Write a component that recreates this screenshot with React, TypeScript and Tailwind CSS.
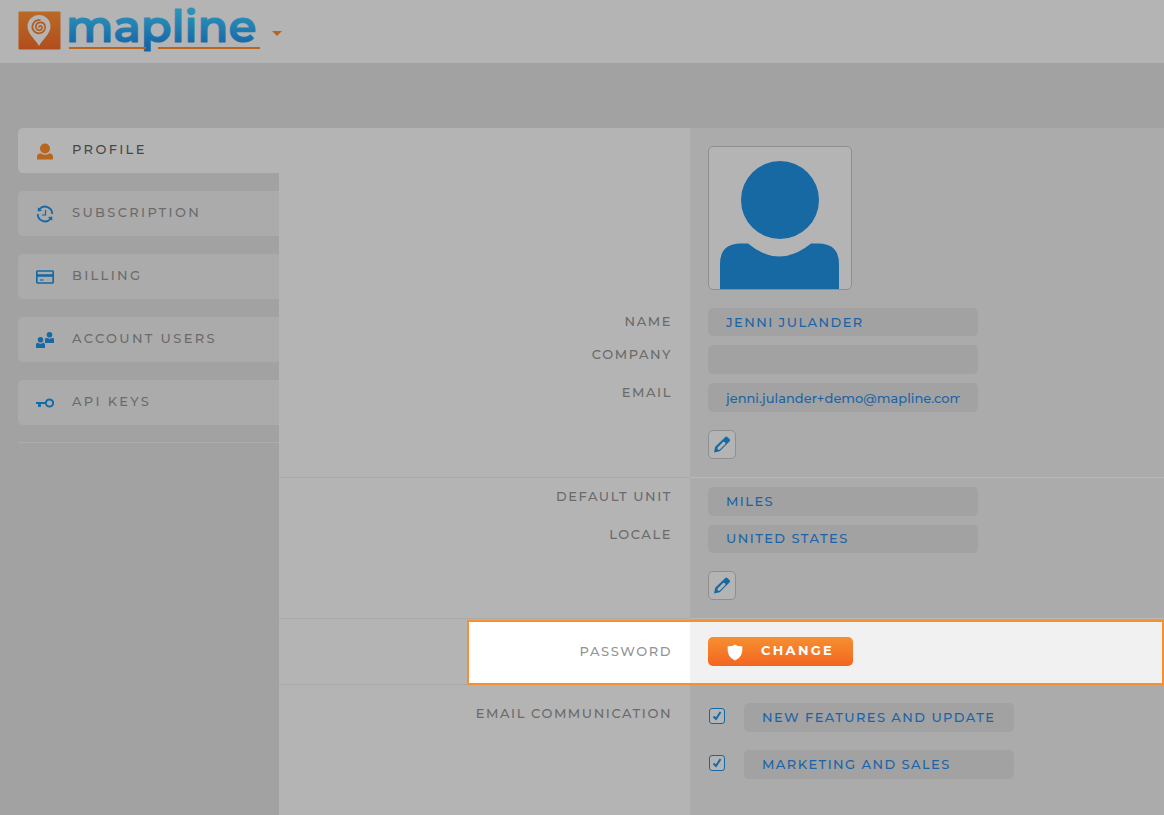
import type { ReactNode } from "react";

const labelClass = "pr-[18px] text-right text-[13px] leading-[18px] font-medium tracking-[0.12em] text-[#6b6b6b]";
const fieldClass =
    "block w-[270px] appearance-none rounded-[5px] bg-[#a2a2a2] px-[18px] text-[13px] font-medium text-[#1c64a6] outline-none";

function UserIcon() {
    return (
        <svg viewBox="0 0 18 18" className="h-[18px] w-[18px]" fill="#b8651f">
            <circle cx="9" cy="6.500" r="5" />
            <path d="M1 17.500v-2.500q0-3.300 3.400-3.700 4.600 3 9.200 0 3.400.4 3.400 3.700v2.500z" />
        </svg>
    );
}

function HistoryIcon() {
    return (
        <svg viewBox="0 0 18 18" className="h-[18px] w-[18px]" fill="none" stroke="#1769a4">
            <path d="M3.400 4.300a7.200 7.200 0 0 1 12.800 4.700" strokeWidth="1.800" />
            <path d="M14.600 13.700A7.200 7.200 0 0 1 1.800 9" strokeWidth="1.800" />
            <path d="M1.800 2.200v4.300l4.300-.8zM16.200 15.800v-4.300l-4.300.8z" fill="#1769a4" stroke="none" />
            <path d="M9.500 5v5H6" strokeWidth="1.200" />
        </svg>
    );
}

function CardIcon() {
    return (
        <svg viewBox="0 0 18 18" className="h-[18px] w-[18px]" fill="none" stroke="#1769a4">
            <rect x=".8" y="3" width="16.400" height="12" rx="1" strokeWidth="1.700" />
            <path d="M1 7.500h16" strokeWidth="2.600" />
            <path d="M4 12h3.500" strokeWidth="1.200" />
        </svg>
    );
}

function UsersIcon() {
    return (
        <svg viewBox="0 0 18 18" className="h-[18px] w-[18px]" fill="#1769a4">
            <circle cx="13.500" cy="3.800" r="2.800" />
            <path d="M9 12V8.500q0-1.500 1.700-1.700 2.800 1.800 5.600 0 1.700.2 1.700 1.700V12z" />
            <circle cx="4.500" cy="8.800" r="2.800" />
            <path d="M0 17v-3.500q0-1.500 1.700-1.700 2.800 1.800 5.600 0 1.700.2 1.700 1.700V17z" />
        </svg>
    );
}

function KeyIcon() {
    return (
        <svg viewBox="0 0 18 18" className="h-[18px] w-[18px]" fill="none" stroke="#1769a4">
            <circle cx="13.500" cy="9" r="3.600" strokeWidth="2" />
            <path d="M0 9h10" strokeWidth="2" />
            <path d="M3.500 9v4" strokeWidth="2.800" />
        </svg>
    );
}

const navItems: { name: string; icon: ReactNode }[] = [
    { name: "PROFILE", icon: <UserIcon /> },
    { name: "SUBSCRIPTION", icon: <HistoryIcon /> },
    { name: "BILLING", icon: <CardIcon /> },
    { name: "ACCOUNT USERS", icon: <UsersIcon /> },
    { name: "API KEYS", icon: <KeyIcon /> },
];

function Logo() {
    return (
        <svg viewBox="0 0 244 51" className="h-[51px] w-[244px] overflow-visible" role="img" aria-label="mapline">
            <defs>
                <linearGradient id="pinBox" x1="0" y1="0" x2="0" y2="1">
                    <stop offset="0" stopColor="#b96a25" />
                    <stop offset="1" stopColor="#b24d1d" />
                </linearGradient>
                <linearGradient id="wordmark" x1="0" y1="6" x2="0" y2="40" gradientUnits="userSpaceOnUse">
                    <stop offset="0" stopColor="#2c92b8" />
                    <stop offset="1" stopColor="#1765a6" />
                </linearGradient>
            </defs>
            <rect x=".5" y="5.500" width="42" height="38" rx="1" fill="url(#pinBox)" />
            <path d="M21 40c-3-6-11.500-12-11.500-19.500a11.500 11.500 0 0 1 23 0C32.500 28 24 34 21 40z" fill="#b4b4b4" />
            <path
                d="M21.500 21.500c-1-1 .3-2.200 1.500-1.500 2 1.200 1 4.300-1.500 4.300-3.300 0-4.700-3.600-3-6 2.200-3 7-2.500 8.300 1 1.500 4-1.500 8-5.500 8-5.500 0-8.300-5-6.300-9.300 1.500-3 4.500-4.300 7.500-3.800"
                fill="none"
                stroke="#b55c20"
                strokeWidth="1.700"
            />
            <text
                x="48"
                y="36"
                fontSize="45"
                fontWeight="600"
                fontFamily="Montserrat, Inter, sans-serif"
                fill="url(#wordmark)"
                stroke="url(#wordmark)"
                strokeWidth="1"
                strokeLinejoin="round"
            >
                mapline
            </text>
            <path d="M51 42h77M140 42h102" stroke="#b8651f" strokeWidth="2" />
        </svg>
    );
}

function Avatar() {
    return (
        <div className="h-36 w-36 overflow-hidden rounded-[5px] border border-[#8f8f8f] bg-[#b4b4b4]">
            <svg viewBox="0 0 142 142" className="h-full w-full" fill="#1769a4">
                <circle cx="71" cy="53" r="39" />
                <path d="M11 142v-25q0-20 20-20.500h8q31 26 63 0h8q20 .5 20 20.500v25z" />
            </svg>
        </div>
    );
}

function EditButton({ label }: { label: string }) {
    return (
        <button
            type="button"
            aria-label={label}
            className="mt-[18px] flex h-[29px] w-7 items-center justify-center rounded-[5px] border border-[#8f8f8f] bg-[#b4b4b4]"
        >
            <svg viewBox="0 0 18 18" className="h-[18px] w-[18px]" fill="#1769a4">
                <path
                    fillRule="evenodd"
                    d="M1 16.500 2.200 10.800 12.300.900q1-.9 2 0l2.400 2.400q.9 1 0 2L6.700 15.300zM4.600 11.400a1.600 1.600 0 0 0 2.200 2.200l5.400-5.400a1.600 1.600 0 0 0-2.200-2.200z"
                />
            </svg>
        </button>
    );
}

function Section({ children }: { children: ReactNode }) {
    return <section className="grid grid-cols-[411px_1fr]">{children}</section>;
}

function CheckOption({ id, text }: { id: string; text: string }) {
    return (
        <div className="flex gap-[19px]">
            <span className="relative ml-px mt-[5px] h-4 w-4">
                <input
                    id={id}
                    type="checkbox"
                    defaultChecked
                    className="block h-4 w-4 appearance-none rounded-[3px] border border-[#1769a4] bg-[#b4b4b4]"
                />
                <svg viewBox="0 0 16 16" className="pointer-events-none absolute inset-0 h-4 w-4" fill="none" stroke="#1769a4">
                    <path d="M4.500 8.500 7 11l4.500-7" strokeWidth="2" />
                </svg>
            </span>
            <label
                htmlFor={id}
                className={`${fieldClass} h-[29px] leading-[29px] tracking-[0.11em] whitespace-nowrap`}
            >
                {text}
            </label>
        </div>
    );
}

export default function App() {
    return (
        <div className="flex min-h-screen flex-col bg-[#a2a2a2] font-['Montserrat','Inter',sans-serif]">
            <header className="flex h-[63px] items-center bg-[#b4b4b4] pl-[18px]">
                <Logo />
                <button type="button" aria-label="Open menu" className="ml-[10px] pt-1">
                    <svg viewBox="0 0 10 5" className="h-[5px] w-[10px]" fill="#b8651f">
                        <path d="M0 0h10L5 5z" />
                    </svg>
                </button>
            </header>

            <div className="flex flex-1 pt-[65px]">
                {/* Account navigation */}
                <nav className="w-[279px] shrink-0 pl-[18px]">
                    <ul className="flex flex-col gap-[18px] border-b border-[#adadad] pb-[17px]">
                        {navItems.map((item, i) => (
                            <li key={item.name}>
                                <a
                                    href="#"
                                    className={`flex h-[45px] items-center rounded-l-[5px] pl-[18px] text-[13px] font-medium tracking-[0.18em] ${
                                        i === 0 ? "bg-[#b4b4b4] text-[#484848]" : "bg-[#ababab] text-[#6b6b6b]"
                                    }`}
                                >
                                    <span className="mr-[18px] pt-px">{item.icon}</span>
                                    <span className="pb-px">{item.name}</span>
                                </a>
                            </li>
                        ))}
                    </ul>
                </nav>

                <main className="flex min-w-0 flex-1 flex-col bg-[linear-gradient(to_right,#b4b4b4_411px,#ababab_411px)]">
                    {/* Contact details */}
                    <Section>
                        <div className="border-b border-[#a9a9a9] pt-[180px]">
                            <label htmlFor="name" className={`${labelClass} block h-[37px] pt-1`}>NAME</label>
                            <label htmlFor="company" className={`${labelClass} block h-[38px]`}>COMPANY</label>
                            <label htmlFor="email" className={`${labelClass} block h-[38px]`}>EMAIL</label>
                        </div>
                        <div className="border-b border-[#b8b8b8] py-[18px] pl-[18px]">
                            <Avatar />
                            <div className="mt-[18px] flex flex-col gap-[9px]">
                                <input id="name" defaultValue="JENNI JULANDER" className={`${fieldClass} h-7 tracking-[0.11em]`} />
                                <input id="company" className={`${fieldClass} h-[29px]`} />
                                <input
                                    id="email"
                                    type="email"
                                    defaultValue="jenni.julander+demo@mapline.com"
                                    className={`${fieldClass} h-[29px]`}
                                />
                            </div>
                            <EditButton label="Edit contact details" />
                        </div>
                    </Section>

                    {/* Units and locale */}
                    <Section>
                        <div className="border-b border-[#a9a9a9] pt-[9px]">
                            <label htmlFor="unit" className={`${labelClass} block h-[38px]`}>DEFAULT UNIT</label>
                            <label htmlFor="locale" className={`${labelClass} block h-[38px]`}>LOCALE</label>
                        </div>
                        <div className="border-b border-[#b8b8b8] pt-[9px] pb-[18px] pl-[18px]">
                            <div className="flex flex-col gap-[9px]">
                                <select id="unit" className={`${fieldClass} h-[29px] tracking-[0.11em]`}>
                                    <option>MILES</option>
                                </select>
                                <select id="locale" className={`${fieldClass} h-7 tracking-[0.11em]`}>
                                    <option>UNITED STATES</option>
                                </select>
                            </div>
                            <EditButton label="Edit units and locale" />
                        </div>
                    </Section>

                    {/* Password */}
                    <Section>
                        <div className="border-b border-[#a9a9a9] pt-px pl-[188px]">
                            <div className="-mb-px flex h-[65px] items-center justify-end border-y-2 border-l-2 border-[#f49131] bg-white pr-[18px] pb-0.5 text-[13px] font-medium tracking-[0.12em] text-[#949494]">
                                PASSWORD
                            </div>
                        </div>
                        <div className="pt-px">
                            <div className="flex h-[65px] items-center border-y-2 border-r-2 border-[#f49131] bg-[#f1f1f1] pb-0.5 pl-[18px]">
                                <button
                                    type="button"
                                    className="flex h-[29px] w-[145px] items-center rounded-[5px] bg-gradient-to-b from-[#f68f30] to-[#f26522] pl-[18px] text-[13px] font-bold tracking-[0.18em] text-white"
                                >
                                    <svg viewBox="0 0 18 18" className="mr-[17px] h-[18px] w-[18px]" fill="white">
                                        <path d="M9 1.500q3 2.200 7.300 1.800Q17.500 14.500 9 17.500.5 14.500 1.700 3.300 6 3.700 9 1.500z" />
                                    </svg>
                                    <span className="pb-0.5">CHANGE</span>
                                </button>
                            </div>
                        </div>
                    </Section>

                    {/* Email preferences */}
                    <Section>
                        <h2 className={`${labelClass} pt-[19px]`}>EMAIL COMMUNICATION</h2>
                        <div className="flex flex-col gap-[18px] pt-[18px] pl-[18px]">
                            <CheckOption id="features" text="NEW FEATURES AND UPDATE" />
                            <CheckOption id="marketing" text="MARKETING AND SALES" />
                        </div>
                    </Section>
                </main>
            </div>
        </div>
    );
}
